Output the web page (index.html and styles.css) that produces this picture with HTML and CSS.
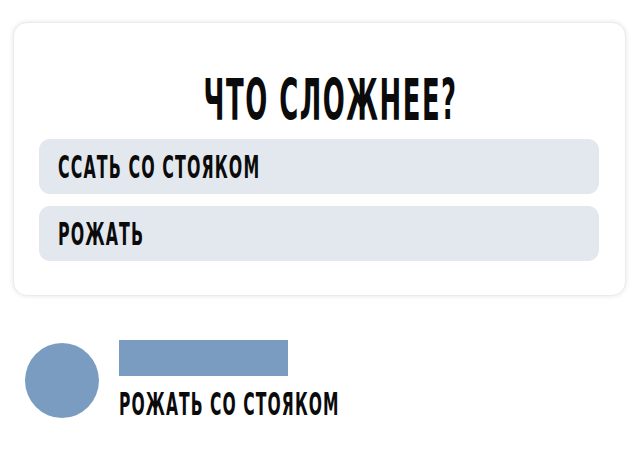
FILE: index.html
```html
<!DOCTYPE html>
<html lang="ru">
<head>
<meta charset="utf-8">
<title>Что сложнее?</title>
<link rel="stylesheet" href="styles.css">
</head>
<body>
  <section class="poll">
    <h1 class="poll-title"><span class="squeeze">ЧТО СЛОЖНЕЕ?</span></h1>
    <ul class="poll-options">
      <li class="poll-option"><span class="squeeze">ССАТЬ СО СТОЯКОМ</span></li>
      <li class="poll-option"><span class="squeeze">РОЖАТЬ</span></li>
    </ul>
  </section>

  <article class="reply">
    <div class="reply-avatar"></div>
    <div class="reply-body">
      <div class="reply-name"></div>
      <p class="reply-text"><span class="squeeze">РОЖАТЬ СО СТОЯКОМ</span></p>
    </div>
  </article>
</body>
</html>
```

FILE: styles.css
```css
* {
  box-sizing: border-box;
}

body {
  margin: 0;
  width: 640px;
  height: 469px;
  background: #ffffff;
  font-family: "DejaVu Sans Condensed", "DejaVu Sans", sans-serif;
  font-stretch: condensed;
  font-weight: 700;
  color: #0b0b0b;
  overflow: hidden;
}

/* narrow display lettering: a heavy condensed face squeezed further */
.squeeze {
  display: inline-block;
  white-space: nowrap;
  transform: scaleX(var(--sx, 0.55));
  transform-origin: left center;
}

.poll {
  margin: 22px 14px 0 13px;
  height: 274px;
  padding: 49px 26px 0 25px;
  background: #ffffff;
  border: 1px solid #ebebeb;
  border-radius: 14px;
  box-shadow: 0 0 5px rgba(0, 0, 0, 0.10);
}

.poll-title {
  margin: 0 0 10px;
  padding-left: 24px;
  font-size: 57px;
  line-height: 57px;
  font-weight: 700;
  letter-spacing: 3px;
  text-align: center;
}

.poll-title .squeeze {
  --sx: 0.505;
  transform-origin: center center;
}

.poll-options {
  list-style: none;
  margin: 0;
  padding: 0;
  display: flex;
  flex-direction: column;
  gap: 12px;
}

.poll-option {
  height: 55px;
  display: flex;
  align-items: center;
  padding: 0 0 0 19px;
  background: #e3e8ef;
  border-radius: 11px;
  font-size: 32px;
  line-height: 32px;
  letter-spacing: 2px;
}

.poll-option .squeeze {
  --sx: 0.55;
}

.reply {
  display: flex;
  align-items: flex-start;
  gap: 20px;
  padding: 44px 0 0 25px;
}

.reply-avatar {
  flex: none;
  width: 74px;
  height: 75px;
  margin-top: 3px;
  border-radius: 50%;
  background: #7b9cc1;
}

.reply-body {
  display: flex;
  flex-direction: column;
}

.reply-name {
  width: 169px;
  height: 36px;
  background: #7b9cc1;
}

.reply-text {
  margin: 11px 0 0;
  font-size: 32px;
  line-height: 34px;
  letter-spacing: 2px;
}

.reply-text .squeeze {
  --sx: 0.54;
}
```
